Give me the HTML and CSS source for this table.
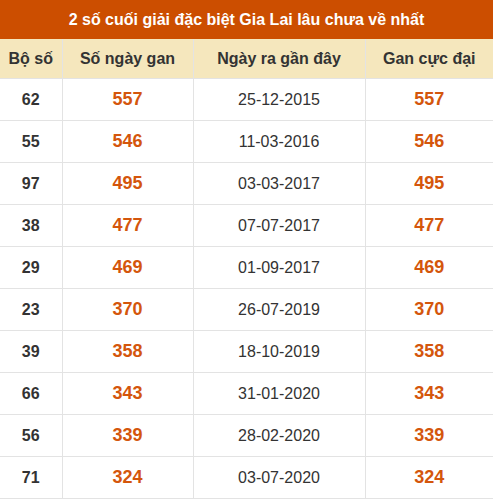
FILE: index.html
```html
<!DOCTYPE html>
<html lang="vi">
<head>
<meta charset="utf-8">
<link rel="stylesheet" href="styles.css">
</head>
<body>
<div class="box">
  <div class="title">2 số cuối giải đặc biệt Gia Lai lâu chưa về nhất</div>
  <table class="gan">
    <colgroup>
      <col class="c1"><col class="c2"><col class="c3"><col class="c4">
    </colgroup>
    <thead>
      <tr><th>Bộ số</th><th>Số ngày gan</th><th>Ngày ra gần đây</th><th>Gan cực đại</th></tr>
    </thead>
    <tbody>
      <tr><td class="num">62</td><td class="hot">557</td><td class="date">25-12-2015</td><td class="hot">557</td></tr>
      <tr><td class="num">55</td><td class="hot">546</td><td class="date">11-03-2016</td><td class="hot">546</td></tr>
      <tr><td class="num">97</td><td class="hot">495</td><td class="date">03-03-2017</td><td class="hot">495</td></tr>
      <tr><td class="num">38</td><td class="hot">477</td><td class="date">07-07-2017</td><td class="hot">477</td></tr>
      <tr><td class="num">29</td><td class="hot">469</td><td class="date">01-09-2017</td><td class="hot">469</td></tr>
      <tr><td class="num">23</td><td class="hot">370</td><td class="date">26-07-2019</td><td class="hot">370</td></tr>
      <tr><td class="num">39</td><td class="hot">358</td><td class="date">18-10-2019</td><td class="hot">358</td></tr>
      <tr><td class="num">66</td><td class="hot">343</td><td class="date">31-01-2020</td><td class="hot">343</td></tr>
      <tr><td class="num">56</td><td class="hot">339</td><td class="date">28-02-2020</td><td class="hot">339</td></tr>
      <tr><td class="num">71</td><td class="hot">324</td><td class="date">03-07-2020</td><td class="hot">324</td></tr>
    </tbody>
  </table>
</div>
</body>
</html>
```
FILE: styles.css
```css
html, body {
  margin: 0;
  padding: 0;
  background: #fff;
}
body {
  font-family: "Liberation Sans", Arial, sans-serif;
  color: #333;
}
.box {
  width: 493px;
}
.title {
  height: 39px;
  background: #cc4e00;
  color: #fff;
  font-weight: bold;
  font-size: 16px;
  line-height: 39px;
  text-align: center;
}
.gan {
  width: 493px;
  border-collapse: collapse;
  table-layout: fixed;
}
.c1 { width: 62px; }
.c2 { width: 131px; }
.c3 { width: 172px; }
.c4 { width: 128px; }
.gan th {
  height: 39px;
  padding: 0;
  background: #f5e7bd;
  font-size: 16px;
  font-weight: bold;
  color: #333;
  text-align: center;
  border-left: 1px solid #e3e3e3;
  border-bottom: 1px solid #e3e3e3;
}
.gan td {
  height: 41px;
  padding: 0;
  text-align: center;
  border-left: 1px solid #e3e3e3;
  border-bottom: 1px solid #e3e3e3;
}
.gan th:first-child, .gan td:first-child {
  border-left: none;
}
.num {
  font-size: 16px;
  font-weight: bold;
  color: #333;
}
.hot {
  font-size: 18px;
  font-weight: bold;
  color: #d4560c;
}
.date {
  font-size: 16px;
  color: #333;
}
```
